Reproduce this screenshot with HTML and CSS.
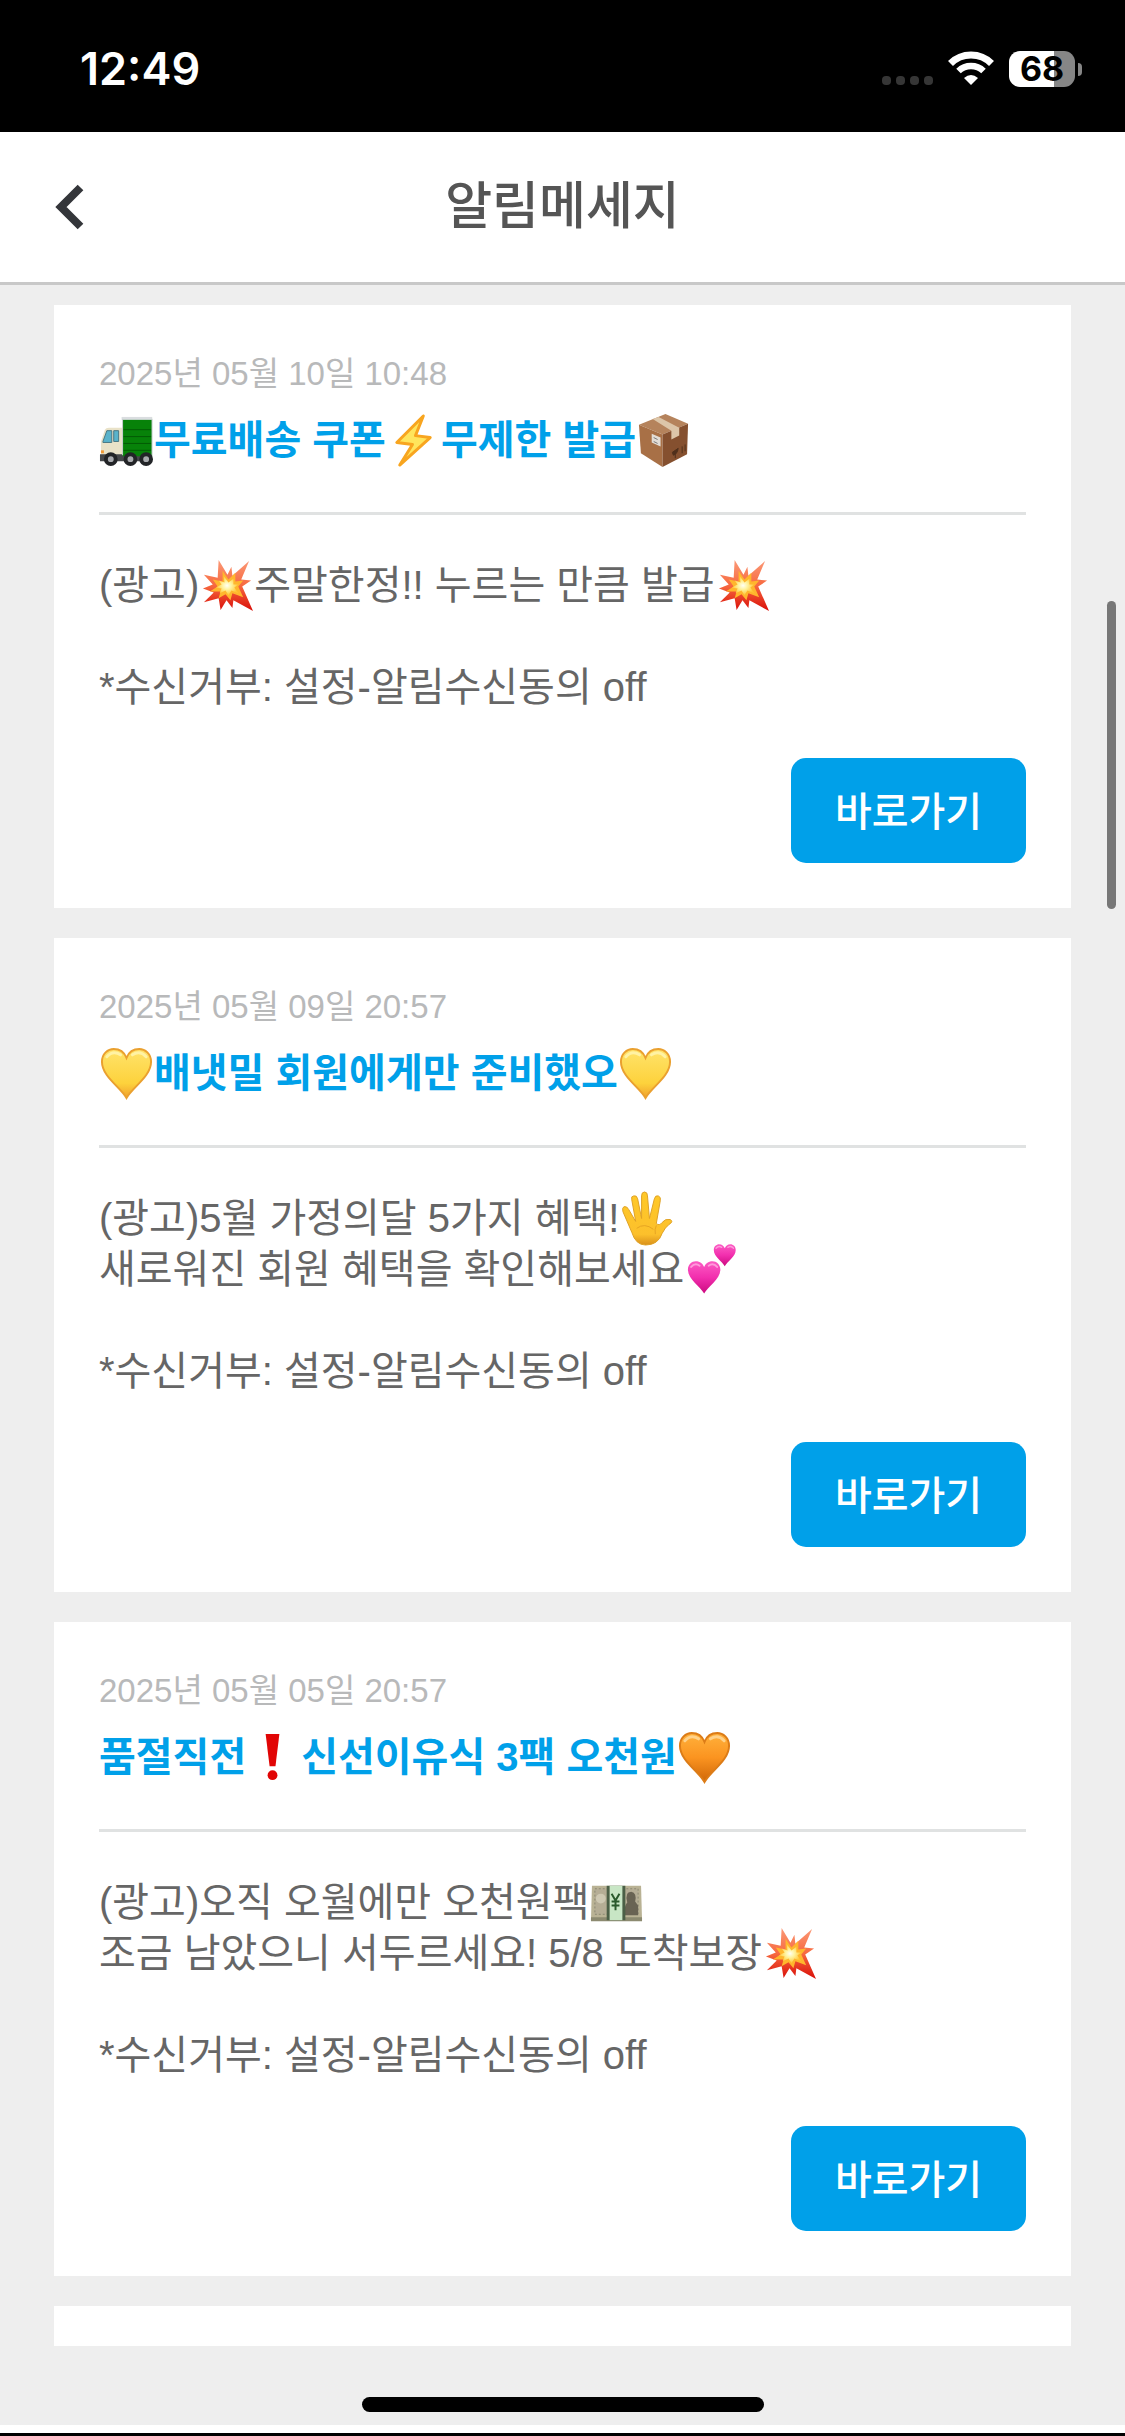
FILE: index.html
```html
<!DOCTYPE html>
<html lang="ko">
<head>
<meta charset="utf-8">
<meta name="viewport" content="width=device-width, initial-scale=1">
<title>알림메세지</title>
<link rel="stylesheet" href="styles.css">
</head>
<body>
<svg class="sprite" aria-hidden="true">
  <defs>
    <linearGradient id="gold" x1="0" y1="0" x2="0" y2="1"><stop offset="0" stop-color="#ffe36b"/><stop offset=".7" stop-color="#fdd23c"/><stop offset="1" stop-color="#f0a02c"/></linearGradient>
    <linearGradient id="amber" x1="0" y1="0" x2="0" y2="1"><stop offset="0" stop-color="#ffb13c"/><stop offset=".5" stop-color="#fb9420"/><stop offset="1" stop-color="#cf6708"/></linearGradient>
    <linearGradient id="pink" x1="0" y1="0" x2="0" y2="1"><stop offset="0" stop-color="#fc5cc4"/><stop offset=".5" stop-color="#f22fae"/><stop offset="1" stop-color="#cc0a80"/></linearGradient>
    <linearGradient id="flame" x1="0" y1="0" x2="0" y2="1"><stop offset="0" stop-color="#fb9a78"/><stop offset=".5" stop-color="#f7693f"/><stop offset="1" stop-color="#d90d08"/></linearGradient>
    <linearGradient id="palm" x1="0" y1="0" x2="0" y2="1"><stop offset="0" stop-color="#ffc928"/><stop offset=".8" stop-color="#fcc02c"/><stop offset="1" stop-color="#d9901c"/></linearGradient>
    <radialGradient id="spark"><stop offset="0" stop-color="#fffff4"/><stop offset=".4" stop-color="#fff3a0"/><stop offset="1" stop-color="#ffc533"/></radialGradient>
    <path id="heart-shape" d="M28 53C22 42 3 31 3 16C3 8 9 3 15 3C22 3 26 7 28 12C30 7 34 3 41 3C47 3 53 8 53 16C53 31 34 42 28 53Z"/>
  </defs>
  <symbol id="truck" viewBox="0 0 56 56">
    <path d="M2 43V29L6 17Q7 15 10 15H25V46H2Z" fill="#e9e2c8"/>
    <path d="M4 29L8 18H13V30H4ZM15 18H20V29H15Z" fill="#59b3cb" stroke="#477683"/>
    <path d="M2 38H5V41H2Z" fill="#f29a35"/>
    <path d="M1 42H54V49H1Z" fill="#45474a"/>
    <path d="M24 4H54V44H24Z" fill="#078209"/>
    <path d="M23 4H54V7H23Z" fill="#dadde0"/><path d="M24 6V43M54 6V44" stroke="#c9cdd0"/>
    <path d="M25 17H53M25 24H53M25 31H53M25 38H53" stroke="#035b05"/>
    <g fill="#a8aaae" stroke="#222427" stroke-width="4"><circle cx="12" cy="47" r="5"/><circle cx="32" cy="47" r="5"/><circle cx="48" cy="47" r="5"/></g>
  </symbol>
  <symbol id="bolt" viewBox="0 0 56 56"><path d="M38 3L11 30L27 32L14 53L45 25L30 23Z" fill="#ffe55c" stroke="#f8a51f" stroke-width="3" stroke-linejoin="round"/></symbol>
  <symbol id="box" viewBox="0 0 56 56">
    <path d="M3 12L30 1L53 11L27 22Z" fill="#b5835c"/>
    <path d="M3 12L27 22V55L5 41Z" fill="#a87046"/>
    <path d="M27 22L53 11L52 42L27 55Z" fill="#85502f"/>
    <path d="M17 6L23 4L44 15V23L36 27V18Z" fill="#dcc5a8"/>
    <path d="M16 21L25 25V34L16 30Z" fill="#e3ddd6"/><path d="M18 25L22 27M18 29L22 31" stroke="#777" stroke-width="1"/>
    <path d="M37 40L43 36Q42 42 38 43ZM40 41V46M47 34V41M50 32V39" stroke="#50301c" fill="#50301c"/>
  </symbol>
  <symbol id="burst" viewBox="0 0 56 56">
    <path d="M20 2L29 17L33 9L34 18L51 3L43 22L53 23L44 29L55 54L35 43L34 51L28 43L22 53L20 41L5 45L15 35L4 31L14 27L5 17L19 20Z" fill="url(#flame)"/>
    <path d="M24 13L30 22L37 15L37 24L45 23L40 29L45 40L34 36L32 43L27 37L20 41L22 34L11 34L19 29L14 22L24 24Z" fill="#ffb62d"/>
    <path d="M25 18L30 25L35 21L35 27L40 27L36 30L40 36L33 33L30 38L27 33L21 36L23 31L17 30L23 27L20 23L26 25Z" fill="url(#spark)"/>
  </symbol>
  <symbol id="heart-yellow" viewBox="0 0 56 56"><use href="#heart-shape" fill="url(#gold)" stroke="#eaa02f" stroke-width="2"/><path d="M8 11Q14 4 22 9M34 9Q42 4 48 11" stroke="#fff2a4" stroke-width="3" fill="none" stroke-linecap="round"/></symbol>
  <symbol id="heart-orange" viewBox="0 0 56 56"><use href="#heart-shape" fill="url(#amber)" stroke="#dc7c17" stroke-width="2"/><path d="M8 11Q14 4 22 9M34 9Q42 4 48 11" stroke="#ffd28a" stroke-width="3" fill="none" stroke-linecap="round"/></symbol>
  <symbol id="hearts-pink" viewBox="0 0 56 56">
    <svg x="2" y="17" width="37" height="38" viewBox="0 0 56 56"><use href="#heart-shape" fill="url(#pink)"/><path d="M8 12Q14 5 21 10M35 10Q42 5 48 12" stroke="#ff9adb" stroke-width="3" fill="none" stroke-linecap="round"/></svg>
    <svg x="29" y="1" width="25" height="25" viewBox="0 0 56 56"><use href="#heart-shape" fill="url(#pink)"/><path d="M8 12Q14 5 21 10M35 10Q42 5 48 12" stroke="#ff9adb" stroke-width="3" fill="none" stroke-linecap="round"/></svg>
  </symbol>
  <symbol id="hand" viewBox="0 0 56 56">
    <path d="M13 42L4 21Q3 17 5 16Q8 15 10 19L17 31L13 9Q12 5 15 5Q18 4 19 8L23 28V5Q23 1 26 1Q29 1 29 5L31 28L36 8Q37 4 40 5Q43 6 42 10L38 33Q41 36 44 32Q47 28 52 29Q56 31 51 34Q47 37 44 43Q40 55 27 55Q17 55 13 42Z" fill="url(#palm)" stroke="#dea126"/>
    <path d="M18 38Q26 32 35 39M38 35Q36 39 37 44" stroke="#e5a423" fill="none"/>
  </symbol>
  <symbol id="mark" viewBox="0 0 56 56"><path d="M20 4H34L30 37H24Z" fill="#e10505"/><circle cx="27" cy="46" r="5" fill="#e10505"/></symbol>
  <symbol id="money" viewBox="0 0 56 56">
    <path d="M3 11H53L54 46H2Z" fill="#b9b294"/><path d="M2 43H54V47H2Z" fill="#8c8a70"/>
    <path d="M6 14H50V40H6Z" fill="#b5ad95" stroke="#8b8873" stroke-dasharray="2 2"/>
    <circle cx="12" cy="24" r="5" fill="#cec8b2"/><path d="M36 38Q36 31 39 28Q36 17 43 17Q49 18 47 27L50 31V41H36Z" fill="#696353"/>
    <path d="M18 11H37V46H18Z" fill="#4b5f46"/><path d="M21 11H34V46H21Z" fill="#c8e6c5"/>
    <path d="M23 19L27 26L31 19M27 26V36M23 27H31M23 31H31" stroke="#295a2c" stroke-width="2" fill="none"/>
  </symbol>
</svg>

<div class="screen">
  <div class="status">
    <time class="clock">12:49</time>
    <div class="indicators">
      <svg class="signal" viewBox="0 0 52 36" role="img" aria-label="신호 없음"><g fill="#363636"><rect x="1" y="25" width="9" height="9" rx="4"/><rect x="15" y="25" width="9" height="9" rx="4"/><rect x="29" y="25" width="9" height="9" rx="4"/><rect x="43" y="25" width="9" height="9" rx="4"/></g></svg>
      <svg class="wifi" viewBox="0 0 46 36" role="img" aria-label="Wi-Fi"><g fill="none" stroke="#fff"><path d="M2.500 12.500A29 29 0 0 1 43.500 12.500" stroke-width="7"/><path d="M10.500 20A18 18 0 0 1 35.500 20" stroke-width="6.500"/></g><path d="M23 34L16 27Q23 21 30 27Z" fill="#fff"/></svg>
      <div class="battery"><span class="battery-level">68</span><span class="battery-tip"></span></div>
    </div>
  </div>

  <header class="topbar">
    <button class="back" type="button" aria-label="뒤로"><svg viewBox="0 0 30 46"><path d="M26.500 3.500L7 23L26.500 42.500" fill="none" stroke="#34363a" stroke-width="8"/></svg></button>
    <h1>알림메세지</h1>
  </header>

  <main class="feed">
    <article class="card">
      <header class="card-head">
        <time class="date">2025년 05월 10일 10:48</time>
        <h2><svg class="emoji"><use href="#truck"/></svg>무료배송 쿠폰<svg class="emoji"><use href="#bolt"/></svg>무제한 발급<svg class="emoji"><use href="#box"/></svg></h2>
      </header>
      <p class="message">(광고)<svg class="emoji"><use href="#burst"/></svg>주말한정!! 누르는 만큼 발급<svg class="emoji"><use href="#burst"/></svg><br><br>*수신거부: 설정-알림수신동의 off</p>
      <button class="go" type="button">바로가기</button>
    </article>

    <article class="card">
      <header class="card-head">
        <time class="date">2025년 05월 09일 20:57</time>
        <h2><svg class="emoji"><use href="#heart-yellow"/></svg>배냇밀 회원에게만 준비했오<svg class="emoji"><use href="#heart-yellow"/></svg></h2>
      </header>
      <p class="message">(광고)5월 가정의달 5가지 혜택!<svg class="emoji"><use href="#hand"/></svg><br>새로워진 회원 혜택을 확인해보세요<svg class="emoji"><use href="#hearts-pink"/></svg><br><br>*수신거부: 설정-알림수신동의 off</p>
      <button class="go" type="button">바로가기</button>
    </article>

    <article class="card">
      <header class="card-head">
        <time class="date">2025년 05월 05일 20:57</time>
        <h2>품절직전<svg class="emoji"><use href="#mark"/></svg>신선이유식 3팩 오천원<svg class="emoji"><use href="#heart-orange"/></svg></h2>
      </header>
      <p class="message">(광고)오직 오월에만 오천원팩<svg class="emoji"><use href="#money"/></svg><br>조금 남았으니 서두르세요! 5/8 도착보장<svg class="emoji"><use href="#burst"/></svg><br><br>*수신거부: 설정-알림수신동의 off</p>
      <button class="go" type="button">바로가기</button>
    </article>

    <article class="card card-next"></article>
    <div class="scrollbar"></div>
  </main>

  <footer class="home"><span class="home-bar"></span></footer>
</div>
</body>
</html>
```
FILE: styles.css
```css
* {
  box-sizing: border-box;
}

body {
  margin: 0;
  background: #eee;
  color: #666;
  font-family: "Liberation Sans", "Noto Sans CJK KR", sans-serif;
}

button {
  border: 0;
  padding: 0;
  font-family: inherit;
  cursor: pointer;
}

.sprite {
  position: absolute;
  width: 0;
  height: 0;
}

.screen {
  display: flex;
  flex-direction: column;
  min-height: 100vh;
}

/* Status bar */
.status {
  display: flex;
  align-items: center;
  justify-content: space-between;
  height: 132px;
  padding: 6px 43px 0 80px;
  background: #000;
  color: #fff;
  font-family: Inter, sans-serif;
}

.clock {
  font-size: 45px;
  font-weight: 600;
  line-height: 56px;
}

.indicators {
  display: flex;
  align-items: center;
  gap: 15px;
}

.signal {
  width: 52px;
  height: 36px;
}

.wifi {
  width: 46px;
  height: 36px;
}

.battery {
  display: flex;
  align-items: center;
  gap: 3px;
}

.battery-level {
  width: 66px;
  border-radius: 11px;
  background: linear-gradient(90deg, #fff 68%, #868686 68%);
  color: #000;
  font-size: 34px;
  font-weight: 700;
  line-height: 36px;
  text-align: center;
}

.battery-tip {
  width: 4px;
  height: 13px;
  border-radius: 0 4px 4px 0;
  background: #868686;
}

/* Title bar */
.topbar {
  display: grid;
  grid-template-columns: 60px 1fr 60px;
  align-items: center;
  height: 153px;
  padding: 0 39px;
  border-bottom: 3px solid #c8c8c8;
  background: #fff;
}

.back {
  display: flex;
  justify-content: center;
  background: none;
}

.back svg {
  width: 30px;
  height: 46px;
}

h1 {
  margin: 0;
  color: #555;
  font-size: 51px;
  font-weight: 500;
  line-height: 60px;
  text-align: center;
}

/* Notification cards */
.feed {
  position: relative;
  flex: 1;
  display: flex;
  flex-direction: column;
  gap: 30px;
  padding: 20px 54px 0;
}

.card {
  display: flex;
  flex-direction: column;
  padding: 45px;
  background: #fff;
}

.card-next {
  height: 40px;
  padding: 0;
}

.card-head {
  padding-bottom: 45px;
  border-bottom: 3px solid #e0e2e2;
}

.date {
  display: block;
  color: #b8b9ba;
  font-size: 33px;
  line-height: 48px;
}

h2 {
  margin: 15px 0 0;
  color: #00a0e9;
  font-size: 40px;
  font-weight: 700;
  line-height: 54px;
}

.message {
  margin: 45px 0;
  font-size: 40px;
  line-height: 51px;
}

.emoji {
  width: 55px;
  height: 55px;
  margin: -10px 0;
  vertical-align: -4px;
}

.go {
  align-self: flex-end;
  width: 235px;
  height: 105px;
  padding-bottom: 3px;
  border-radius: 15px;
  background: #00a0e9;
  color: #fff;
  font-size: 40px;
  font-weight: 500;
}

.scrollbar {
  position: absolute;
  top: 316px;
  right: 9px;
  width: 9px;
  height: 308px;
  border-radius: 5px;
  background: #777;
}

/* Home indicator */
.home {
  display: flex;
  justify-content: center;
  align-items: flex-end;
  height: 90px;
  padding-bottom: 13px;
  border-bottom: 3px solid #000;
  background: linear-gradient(#eee 79px, #fff 79px);
}

.home-bar {
  width: 402px;
  height: 15px;
  margin-bottom: 8px;
  border-radius: 8px;
  background: #000;
}
```
